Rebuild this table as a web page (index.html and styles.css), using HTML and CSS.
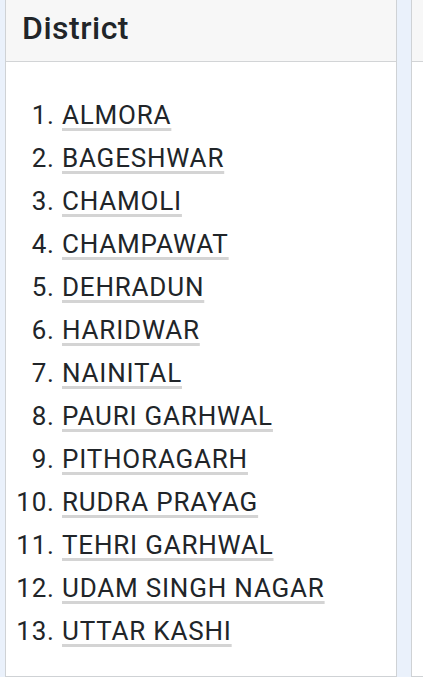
FILE: index.html
```html
<!DOCTYPE html>
<html>
<head>
<meta charset="utf-8">
<link rel="stylesheet" href="styles.css">
</head>
<body>
<div class="row">
  <div class="card">
    <div class="card-header"><h2 class="title">District</h2></div>
    <div class="card-body">
      <ol class="list">
        <li><a href="#">ALMORA</a></li>
        <li><a href="#">BAGESHWAR</a></li>
        <li><a href="#">CHAMOLI</a></li>
        <li><a href="#">CHAMPAWAT</a></li>
        <li><a href="#">DEHRADUN</a></li>
        <li><a href="#">HARIDWAR</a></li>
        <li><a href="#">NAINITAL</a></li>
        <li><a href="#">PAURI GARHWAL</a></li>
        <li><a href="#">PITHORAGARH</a></li>
        <li><a href="#">RUDRA PRAYAG</a></li>
        <li><a href="#">TEHRI GARHWAL</a></li>
        <li><a href="#">UDAM SINGH NAGAR</a></li>
        <li><a href="#">UTTAR KASHI</a></li>
      </ol>
    </div>
  </div>
  <div class="card card-next">
    <div class="card-header"></div>
    <div class="card-body"></div>
  </div>
</div>
</body>
</html>
```

FILE: styles.css
```css
html, body {
  margin: 0;
  padding: 0;
  background: #eaf1fb;
  font-family: Roboto, "Liberation Sans", sans-serif;
  color: #212529;
}
.row {
  display: flex;
  gap: 14px;
  padding-left: 5px;
  height: 677px;
  overflow: hidden;
}
.card {
  flex: 0 0 392px;
  box-sizing: border-box;
  background: #fff;
  border: 1px solid #cfd2d5;
  border-top: none;
  display: flex;
  flex-direction: column;
}
.card-next {
  flex: 0 0 200px;
}
.card-header {
  background: #f7f7f7;
  border-bottom: 1px solid #d2d4d6;
  height: 61px;
  box-sizing: content-box;
  padding: 0 16px;
}
.title {
  margin: 0;
  padding-top: 9px;
  font-size: 32px;
  line-height: 38px;
  font-weight: 500;
  letter-spacing: 0.5px;
  color: #212529;
}
.card-body {
  padding: 16px;
  flex: 1;
}
.list {
  margin: 16px 0 0 0;
  padding-left: 40px;
  font-size: 26px;
  line-height: 43px;
  letter-spacing: 0.8px;
}
.list li::marker {
  color: #212529;
}
.list a {
  color: #212529;
  text-decoration: underline;
  text-decoration-color: #d4d4d4;
  text-decoration-thickness: 3px;
  text-underline-offset: 4px;
}
```
